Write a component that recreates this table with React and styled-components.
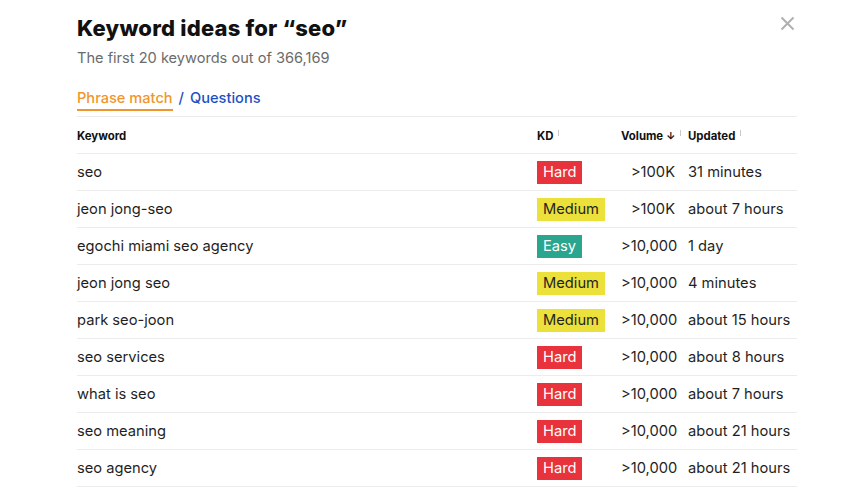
import styled, { createGlobalStyle } from "styled-components";

const GlobalStyle = createGlobalStyle`
  body {
    margin: 0;
    background: #ffffff;
    font-family: "Inter", "Liberation Sans", sans-serif;
    color: #1f1f1f;
  }
`;

const Panel = styled.div`
  position: relative;
  width: 720px;
  padding: 14px 0 0 77px;
`;

const CloseButton = styled.button`
  position: absolute;
  top: 16px;
  right: 2px;
  width: 15px;
  height: 15px;
  padding: 0;
  border: none;
  background: none;
  color: #b0b0b0;
  cursor: pointer;
`;

const Title = styled.h2`
  margin: 0;
  font-size: 22px;
  line-height: 28px;
  font-weight: 800;
  color: #111;
  letter-spacing: 0.2px;
`;

const Subtitle = styled.p`
  margin: 7px 0 0;
  font-size: 14.6px;
  line-height: 18px;
  color: #6b6b6b;
`;

const Tabs = styled.div`
  display: flex;
  align-items: center;
  gap: 6px;
  margin-top: 22px;
  font-size: 14.6px;
  line-height: 18px;
  font-weight: 500;
`;

const Tab = styled.span`
  color: ${(p) => (p.$active ? "#f0962e" : "#1b4fc4")};
  padding-bottom: 2px;
  border-bottom: 2px solid ${(p) => (p.$active ? "#f0962e" : "transparent")};
`;

const Slash = styled.span`
  color: #1b4fc4;
  padding-bottom: 4px;
`;

const Table = styled.div`
  margin-top: 5px;
  border-top: 1px solid #ececec;
`;

const Row = styled.div`
  display: grid;
  grid-template-columns: 460px 84px 67px 1fr;
  align-items: center;
  height: 36px;
  border-bottom: 1px solid #ececec;
  font-size: 14.7px;
  color: #1f1f1f;
`;

const HeadCell = styled.div`
  display: flex;
  align-items: center;
  padding-top: 2px;
  font-size: 11.4px;
  font-weight: 700;
  color: #111;
`;

const Hint = styled.span`
  display: inline-block;
  width: 1px;
  height: 6px;
  margin-left: 5px;
  margin-top: -6px;
  background: #c9c9c9;
`;

const Arrow = styled.span`
  margin-left: 3px;
  font-size: 10px;
`;

const Cell = styled.div`
  text-align: ${(p) => (p.$right ? "right" : "left")};
  padding-right: ${(p) => (p.$right ? "13px" : "0")};
  white-space: nowrap;
`;

const Badge = styled.span`
  display: inline-block;
  height: 23px;
  line-height: 23px;
  padding: 0 6px;
  background: ${(p) => p.$bg};
  color: ${(p) => p.$color};
`;

const kdStyles = {
  Hard: { bg: "#e8323c", color: "#ffffff" },
  Medium: { bg: "#ece13b", color: "#1f1f1f" },
  Easy: { bg: "#2aa58e", color: "#ffffff" },
};

const rows = [
  ["seo", "Hard", ">100K", "31 minutes"],
  ["jeon jong-seo", "Medium", ">100K", "about 7 hours"],
  ["egochi miami seo agency", "Easy", ">10,000", "1 day"],
  ["jeon jong seo", "Medium", ">10,000", "4 minutes"],
  ["park seo-joon", "Medium", ">10,000", "about 15 hours"],
  ["seo services", "Hard", ">10,000", "about 8 hours"],
  ["what is seo", "Hard", ">10,000", "about 7 hours"],
  ["seo meaning", "Hard", ">10,000", "about 21 hours"],
  ["seo agency", "Hard", ">10,000", "about 21 hours"],
];

export default function App() {
  return (
    <Panel>
      <GlobalStyle />
      <CloseButton aria-label="Close">
        <svg width="15" height="15" viewBox="0 0 15 15">
          <path d="M1.5 1.5 L13.5 13.5 M13.5 1.5 L1.5 13.5" stroke="currentColor" strokeWidth="2" />
        </svg>
      </CloseButton>
      <Title>Keyword ideas for “seo”</Title>
      <Subtitle>The first 20 keywords out of 366,169</Subtitle>
      <Tabs>
        <Tab $active>Phrase match</Tab>
        <Slash>/</Slash>
        <Tab>Questions</Tab>
      </Tabs>
      <Table>
        <Row>
          <HeadCell>Keyword</HeadCell>
          <HeadCell>
            KD<Hint />
          </HeadCell>
          <HeadCell>
            Volume<Arrow>↓</Arrow>
            <Hint />
          </HeadCell>
          <HeadCell>
            Updated<Hint />
          </HeadCell>
        </Row>
        {rows.map(([kw, kd, vol, upd]) => (
          <Row key={kw}>
            <Cell>{kw}</Cell>
            <Cell>
              <Badge $bg={kdStyles[kd].bg} $color={kdStyles[kd].color}>
                {kd}
              </Badge>
            </Cell>
            <Cell $right>{vol}</Cell>
            <Cell>{upd}</Cell>
          </Row>
        ))}
      </Table>
    </Panel>
  );
}
